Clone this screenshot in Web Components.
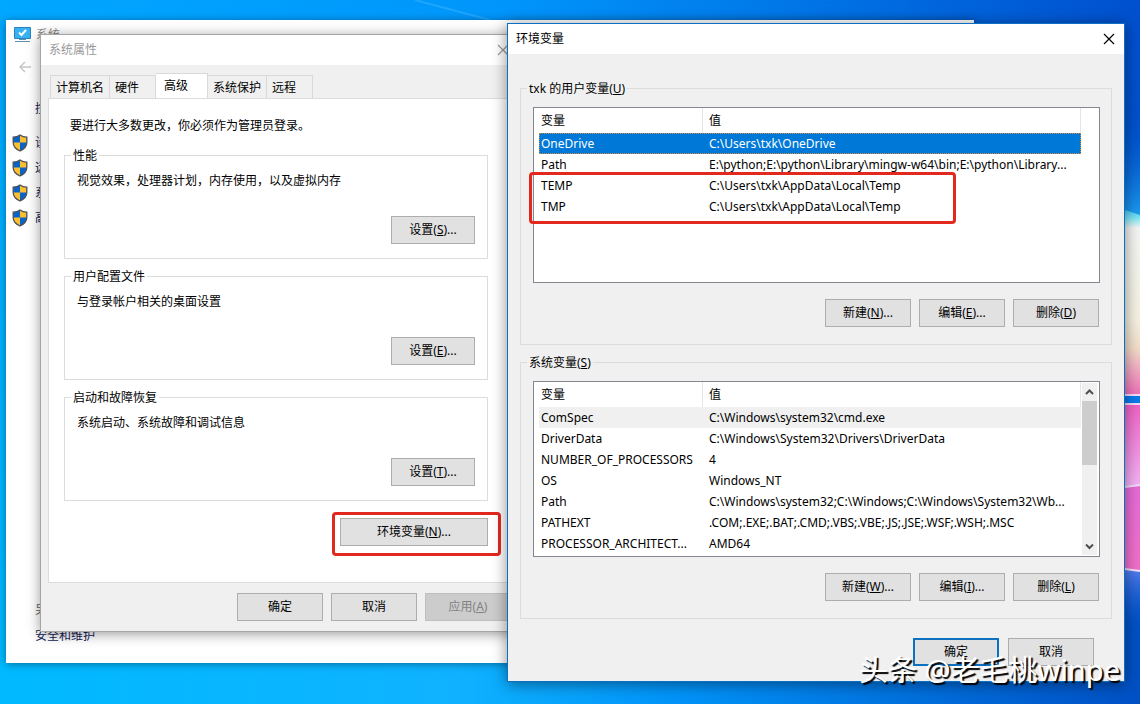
<!DOCTYPE html>
<html lang="zh-CN">
<head>
<meta charset="utf-8">
<title>环境变量</title>
<style>
  body {
    margin: 0;
    font: 12px/16px "Noto Sans", "Noto Sans CJK SC", sans-serif;
    color: #000;
  }
</style>
</head>
<body>
<desk-top></desk-top>

<script>
const SHIELD = `
<svg width="16" height="18" viewBox="0 0 16 18" aria-hidden="true">
  <path d="M8 1C6 2.6 3.6 3.2 1.2 3.2V8.5C1.2 12.4 4 15.2 8 17C12 15.2 14.8 12.4 14.8 8.5V3.2C12.4 3.2 10 2.6 8 1Z" fill="#fbc02f"/>
  <path d="M8 1C6 2.6 3.6 3.2 1.2 3.2V8.6H8Z" fill="#0a63c9"/>
  <path d="M8 17C12 15.2 14.5 12.5 14.8 8.6H8Z" fill="#0a63c9"/>
  <path d="M8 1C6 2.6 3.6 3.2 1.2 3.2V8.5C1.2 12.4 4 15.2 8 17C12 15.2 14.8 12.4 14.8 8.5V3.2C12.4 3.2 10 2.6 8 1Z" fill="none" stroke="#4c5258" stroke-width="1.3"/>
</svg>`

const USER_VARIABLES = [
    ['OneDrive', 'C:\\Users\\txk\\OneDrive'],
    ['Path', 'E:\\python;E:\\python\\Library\\mingw-w64\\bin;E:\\python\\Library...'],
    ['TEMP', 'C:\\Users\\txk\\AppData\\Local\\Temp'],
    ['TMP', 'C:\\Users\\txk\\AppData\\Local\\Temp'],
];

const SYSTEM_VARIABLES = [
    ['ComSpec', 'C:\\Windows\\system32\\cmd.exe'],
    ['DriverData', 'C:\\Windows\\System32\\Drivers\\DriverData'],
    ['NUMBER_OF_PROCESSORS', '4'],
    ['OS', 'Windows_NT'],
    ['Path', 'C:\\Windows\\system32;C:\\Windows;C:\\Windows\\System32\\Wb...'],
    ['PATHEXT', '.COM;.EXE;.BAT;.CMD;.VBS;.VBE;.JS;.JSE;.WSF;.WSH;.MSC'],
    ['PROCESSOR_ARCHITECT...', 'AMD64'],
];

class WinButton extends HTMLElement {
    constructor() {
        super();
        this.attachShadow({mode: 'open'});
    }

    connectedCallback() {
        this.shadowRoot.innerHTML = `
        <style>
          :host { display: block; width: 86px; }
          :host([size="small"]) { width: 84px; }
          :host([size="wide"]) { width: 148px; }
          button {
            box-sizing: border-box;
            width: 100%;
            height: 28px;
            padding: 0;
            border: 1px solid #adadad;
            background: #e1e1e1;
            color: #000;
            font: inherit;
          }
          button:disabled { background: #ccc; border-color: #bfbfbf; color: #838383; }
          :host([primary]) button { border: 2px solid #0f6fc0; }
        </style>
        <button type="button" ${this.hasAttribute('disabled') ? 'disabled' : ''}><slot></slot></button>
        `;
    }
}

class GroupBox extends HTMLElement {
    constructor() {
        super();
        this.attachShadow({mode: 'open'});
    }

    connectedCallback() {
        this.shadowRoot.innerHTML = `
        <style>
          :host { display: block; }
          fieldset {
            box-sizing: border-box;
            height: 100%;
            min-width: 0;
            margin: 0;
            padding: var(--group-padding, 9px 12px 12px);
            border: 1px solid #dcdcdc;
          }
          legend { margin-left: -6px; padding: 2px 2px 0; }
        </style>
        <fieldset><legend><slot name="label"></slot></legend><slot></slot></fieldset>
        `;
    }
}

class VariableList extends HTMLElement {
    constructor() {
        super();
        this.attachShadow({mode: 'open'});
    }

    connectedCallback() {
        const system = this.getAttribute('scope') === 'system';
        const rows = system ? SYSTEM_VARIABLES : USER_VARIABLES;
        const state = system ? 'inactive' : 'selected';
        this.shadowRoot.innerHTML = `
        <style>
          :host {
            box-sizing: border-box;
            display: flex;
            height: 176px;
            border: 1px solid #828790;
            background: #fff;
            padding-left: 5px;
          }
          .view { flex: 1; min-width: 0; }
          table {
            width: 100%;
            table-layout: fixed;
            border-collapse: separate;
            border-spacing: 0;
            font-size: 12px;
            line-height: 16px;
          }
          th, td {
            box-sizing: border-box;
            height: 21px;
            padding: 0 2px;
            text-align: left;
            font-weight: 400;
            white-space: nowrap;
            overflow: hidden;
            text-overflow: ellipsis;
          }
          th { height: 25px; border-right: 1px solid #e5e5e5; }
          th:first-child { width: 164px; }
          th + th, td + td { padding-left: 6px; }
          .selected td { background: #0078d7; color: #fff; }
          .selected { outline: 1px dotted #d98a3a; outline-offset: -1px; }
          .inactive td { background: #f0f0f0; }
          .gap { width: 18px; }
          .scroll {
            display: flex;
            flex-direction: column;
            align-items: center;
            width: 15px;
            margin: 1px 2px 1px 1px;
            background: #f0f0f0;
          }
          .thumb { width: 15px; height: 64px; background: #cdcdcd; }
          .scroll svg:last-child { margin-top: auto; }
        </style>
        <div class="view">
          <table>
            <thead><tr><th>变量</th><th>值</th></tr></thead>
            <tbody>
              ${rows.map(([name, value], i) => `
              <tr class="${i === 0 ? state : ''}"><td>${name}</td><td>${value}</td></tr>`).join('')}
            </tbody>
          </table>
        </div>
        ${system ? `
        <div class="scroll">
          <svg width="15" height="18" viewBox="0 0 15 18"><path d="M4 11L7.5 7.5L11 11" fill="none" stroke="#505050" stroke-width="2"/></svg>
          <div class="thumb"></div>
          <svg width="15" height="18" viewBox="0 0 15 18"><path d="M4 7.5L7.5 11L11 7.5" fill="none" stroke="#505050" stroke-width="2"/></svg>
        </div>` : '<div class="gap"></div>'}
        `;
    }
}

class SystemWindow extends HTMLElement {
    constructor() {
        super();
        this.attachShadow({mode: 'open'});
    }

    connectedCallback() {
        this.shadowRoot.innerHTML = `
        <style>
          :host {
            box-sizing: border-box;
            display: flex;
            flex-direction: column;
            background: #fff;
            box-shadow: 0 1px 8px rgba(0, 0, 0, .4);
          }
          header {
            display: flex;
            align-items: center;
            gap: 5px;
            height: 28px;
            padding: 1px 0 0 8px;
            color: #888;
          }
          .back {
            align-self: flex-start;
            margin: 11px 0 0 12px;
            padding: 0;
            border: 0;
            background: none;
            line-height: 0;
          }
          nav { display: flex; flex-direction: column; gap: 9px; padding: 26px 6px 0; }
          a {
            display: flex;
            align-items: center;
            height: 16px;
            gap: 7px;
            color: #151c55;
            text-decoration: none;
          }
          .home { height: 18px; padding-left: 23px; margin-bottom: 8px; }
          .also { margin: auto 0 19px 29px; color: #666; }
          .also p { margin: 0 0 10px; }
        </style>
        <header>
          <svg width="17" height="16" viewBox="0 0 17 16" aria-hidden="true">
            <path d="M.5 .5H16.5V11.5H.5Z" fill="#36b1f2" stroke="#2b83bd"/>
            <path d="M5 5.5L7.500 8L12 3" fill="none" stroke="#fff" stroke-width="2"/>
            <path d="M5 12.500H12M1 14.500H16" stroke="#5e90ad" stroke-width="1"/>
          </svg>
          <span>系统</span>
        </header>
        <button class="back" type="button" aria-label="返回">
          <svg width="14" height="14" viewBox="0 0 14 14"><path d="M13 7H2M7 2L2 7L7 12" fill="none" stroke="#c8c8c8" stroke-width="1.5"/></svg>
        </button>
        <nav>
          <a class="home" href="#">控</a>
          <a href="#">${SHIELD}设</a>
          <a href="#">${SHIELD}远</a>
          <a href="#">${SHIELD}系</a>
          <a href="#">${SHIELD}高</a>
        </nav>
        <div class="also">
          <p>另</p>
          <a href="#">安全和维护</a>
        </div>
        `;
    }
}

class DialogWindow extends HTMLElement {
    constructor() {
        super();
        this.attachShadow({mode: 'open'});
    }

    connectedCallback() {
        this.shadowRoot.innerHTML = `
        <style>
          :host {
            box-sizing: border-box;
            display: flex;
            flex-direction: column;
            border: 1px solid #0b6fc4;
            background: #f0f0f0;
            box-shadow: 0 2px 14px rgba(0, 0, 0, .45);
          }
          :host([inactive]) { border-color: #a5a5a5; box-shadow: 0 2px 12px rgba(0, 0, 0, .4); }
          header {
            display: flex;
            align-items: center;
            justify-content: space-between;
            height: 30px;
            padding: 0 9px 0 8px;
            background: #fff;
          }
          :host([inactive]) header { color: #999; }
          h1 { margin: 0; font-size: 12px; line-height: 16px; font-weight: 400; }
          button { padding: 0; border: 0; background: none; color: inherit; line-height: 0; }
        </style>
        <header>
          <h1>${this.getAttribute('caption')}</h1>
          <button type="button" aria-label="关闭">
            <svg width="12" height="12" viewBox="0 0 12 12"><path d="M1 1L11 11M11 1L1 11" stroke="currentColor" stroke-width="1.2"/></svg>
          </button>
        </header>
        <slot></slot>
        `;
    }
}

class PropertySheet extends HTMLElement {
    constructor() {
        super();
        this.attachShadow({mode: 'open'});
    }

    connectedCallback() {
        this.shadowRoot.innerHTML = `
        <style>
          :host { display: flex; flex: 1; flex-direction: column; padding: 8px 7px 10px; }
          .tabs { display: flex; align-items: flex-end; padding-left: 2px; }
          .tabs button {
            box-sizing: border-box;
            height: 23px;
            padding: 2px 5px 0;
            border: 1px solid #d9d9d9;
            border-bottom: 0;
            border-left-width: 0;
            background: #f0f0f0;
            color: #000;
            font: inherit;
            text-align: left;
          }
          .tabs button:first-child { border-left-width: 1px; }
          .tabs .short { width: 46px; }
          .tabs .active { width: 52px; height: 26px; padding: 0 8px 2px; background: #fff; margin-bottom: -1px; }
          .page {
            flex: 1;
            display: flex;
            flex-direction: column;
            padding: 19px 22px 0 15px;
            border: 1px solid #dcdcdc;
            background: #fff;
          }
          p { margin: 0; }
          .intro { padding-left: 6px; margin-bottom: 12px; }
          group-box { height: 113px; margin-bottom: 8px; }
          .body { display: flex; flex-direction: column; justify-content: space-between; height: 71px; }
          .body win-button, .env { align-self: flex-end; }
          .env { margin-top: 9px; }
          footer { display: flex; justify-content: flex-end; gap: 8px; padding-top: 10px; }
        </style>
        <div class="tabs" role="tablist">
          <button type="button" role="tab">计算机名</button>
          <button type="button" role="tab" class="short">硬件</button>
          <button type="button" role="tab" class="active" aria-selected="true">高级</button>
          <button type="button" role="tab">系统保护</button>
          <button type="button" role="tab" class="short">远程</button>
        </div>
        <div class="page">
          <p class="intro">要进行大多数更改，你必须作为管理员登录。</p>
          <group-box><span slot="label">性能</span>
            <div class="body"><p>视觉效果，处理器计划，内存使用，以及虚拟内存</p><win-button size="small">设置(<u>S</u>)...</win-button></div>
          </group-box>
          <group-box><span slot="label">用户配置文件</span>
            <div class="body"><p>与登录帐户相关的桌面设置</p><win-button size="small">设置(<u>E</u>)...</win-button></div>
          </group-box>
          <group-box><span slot="label">启动和故障恢复</span>
            <div class="body"><p>系统启动、系统故障和调试信息</p><win-button size="small">设置(<u>T</u>)...</win-button></div>
          </group-box>
          <win-button class="env" size="wide">环境变量(<u>N</u>)...</win-button>
        </div>
        <footer>
          <win-button>确定</win-button>
          <win-button>取消</win-button>
          <win-button disabled>应用(<u>A</u>)</win-button>
        </footer>
        `;
    }
}

class EnvironmentPanel extends HTMLElement {
    constructor() {
        super();
        this.attachShadow({mode: 'open'});
    }

    connectedCallback() {
        this.shadowRoot.innerHTML = `
        <style>
          :host { display: flex; flex-direction: column; padding: 25px 12px 0; }
          group-box {
            --group-padding: 10px 11px 17px 12px;
            margin-bottom: 8px;
          }
          .actions { display: flex; justify-content: flex-end; gap: 8px; padding: 16px 1px 0 0; }
          footer { display: flex; justify-content: flex-end; gap: 9px; padding: 11px 18px 0 0; }
        </style>
        <group-box><span slot="label">txk 的用户变量(<u>U</u>)</span>
          <variable-list scope="user"></variable-list>
          <div class="actions">
            <win-button>新建(<u>N</u>)...</win-button>
            <win-button>编辑(<u>E</u>)...</win-button>
            <win-button>删除(<u>D</u>)</win-button>
          </div>
        </group-box>
        <group-box><span slot="label">系统变量(<u>S</u>)</span>
          <variable-list scope="system"></variable-list>
          <div class="actions">
            <win-button>新建(<u>W</u>)...</win-button>
            <win-button>编辑(<u>I</u>)...</win-button>
            <win-button>删除(<u>L</u>)</win-button>
          </div>
        </group-box>
        <footer>
          <win-button primary>确定</win-button>
          <win-button>取消</win-button>
        </footer>
        `;
    }
}

class DeskTop extends HTMLElement {
    constructor() {
        super();
        this.attachShadow({mode: 'open'});
    }

    connectedCallback() {
        this.shadowRoot.innerHTML = `
        <style>
          :host {
            display: block;
            position: relative;
            min-height: 100vh;
            overflow: hidden;
            background: linear-gradient(90deg, #00a8ff, #0095fb 45%, #0050cf 100%);
          }
          .wallpaper { position: absolute; inset: 0; width: 100%; height: 100%; }
          system-window { position: absolute; left: 6px; top: 20px; width: 968px; height: 643px; }
          .properties { position: absolute; left: 40px; top: 34px; width: 479px; height: 598px; }
          .environment { position: absolute; left: 507px; top: 23px; width: 618px; height: 659px; }
          .mark { position: absolute; box-sizing: border-box; border: 3px solid #e3281e; border-radius: 4px; }
          .mark.button { left: 332px; top: 512px; width: 169px; height: 44px; }
          .mark.rows { left: 529px; top: 172px; width: 427px; height: 52px; }
          .credit {
            position: absolute;
            right: 20px;
            bottom: 16px;
            margin: 0;
            font: 29px/36px "Noto Sans", "Noto Sans CJK SC", sans-serif;
            color: #fff;
            text-shadow: 2px 2px 1px #000;
          }
        </style>
        <svg class="wallpaper" viewBox="0 0 1140 704" preserveAspectRatio="none" aria-hidden="true">
          <defs>
            <linearGradient id="low" x1="0" x2="1"><stop offset="0" stop-color="#00b9ff"/><stop offset=".4" stop-color="#0fb2ff"/><stop offset=".6" stop-color="#0092f8"/><stop offset=".8" stop-color="#0070dc"/><stop offset="1" stop-color="#0050c4"/></linearGradient>
            <linearGradient id="fade" x1="0" x2="0" y1="0" y2="1"><stop offset="0" stop-color="#000"/><stop offset=".9" stop-color="#fff"/></linearGradient>
            <mask id="m"><rect width="1140" height="704" fill="url(#fade)"/></mask>
            <linearGradient id="sky" x1="0" x2="0" y1="0" y2="1"><stop offset="0" stop-color="#0050cf" stop-opacity="0"/><stop offset="1" stop-color="#1c9cf0"/></linearGradient>
            <linearGradient id="pane" x1="0" x2="0" y1="0" y2="1"><stop offset="0" stop-color="#2ab4f5"/><stop offset=".07" stop-color="#7fe6f5"/><stop offset=".12" stop-color="#f2f4f2"/><stop offset=".6" stop-color="#f4f0e0"/><stop offset=".75" stop-color="#f2dcc8"/><stop offset="1" stop-color="#ee6cb8"/></linearGradient>
            <linearGradient id="upper" x1="0" x2="0" y1="0" y2="1"><stop offset="0" stop-color="#ee62c4"/><stop offset="1" stop-color="#f2b4f6"/></linearGradient>
            <linearGradient id="lower" x1="0" x2="0" y1="0" y2="1"><stop offset="0" stop-color="#e66ad8"/><stop offset="1" stop-color="#f070c8"/></linearGradient>
            <linearGradient id="glow" x1="0" x2="0" y1="0" y2="1"><stop offset="0" stop-color="#5a80f0"/><stop offset="1" stop-color="#0a58d0" stop-opacity="0"/></linearGradient>
          </defs>
          <rect width="1140" height="704" fill="url(#low)" mask="url(#m)"/>
          <path d="M415 0L490 20" stroke="#3cb4ff" stroke-opacity=".5" stroke-width="2"/>
          <path d="M1110 110H1140V215H1110Z" fill="url(#sky)"/>
          <path d="M1110 205L1140 215V396H1110Z" fill="url(#pane)"/>
          <path d="M1110 396H1140V403H1110Z" fill="#0a7bec"/>
          <path d="M1110 404H1140V485L1110 489Z" fill="url(#upper)"/>
          <path d="M1110 489L1140 485V571L1110 567Z" fill="url(#lower)"/>
          <path d="M1110 567L1140 571V630H1110Z" fill="url(#glow)"/>
          <path d="M1110 395H1140M1110 404H1140M1110 489L1140 485M1110 567L1140 571" fill="none" stroke="#f6dcf8" stroke-width="2"/>
        </svg>
        <system-window></system-window>
        <dialog-window class="properties" caption="系统属性" inactive><property-sheet></property-sheet></dialog-window>
        <div class="mark button"></div>
        <dialog-window class="environment" caption="环境变量"><environment-panel></environment-panel></dialog-window>
        <div class="mark rows"></div>
        <p class="credit">头条 @老毛桃winpe</p>
        `;
    }
}

customElements.define('win-button', WinButton);
customElements.define('group-box', GroupBox);
customElements.define('variable-list', VariableList);
customElements.define('system-window', SystemWindow);
customElements.define('dialog-window', DialogWindow);
customElements.define('property-sheet', PropertySheet);
customElements.define('environment-panel', EnvironmentPanel);
customElements.define('desk-top', DeskTop);
</script>
</body>
</html>
